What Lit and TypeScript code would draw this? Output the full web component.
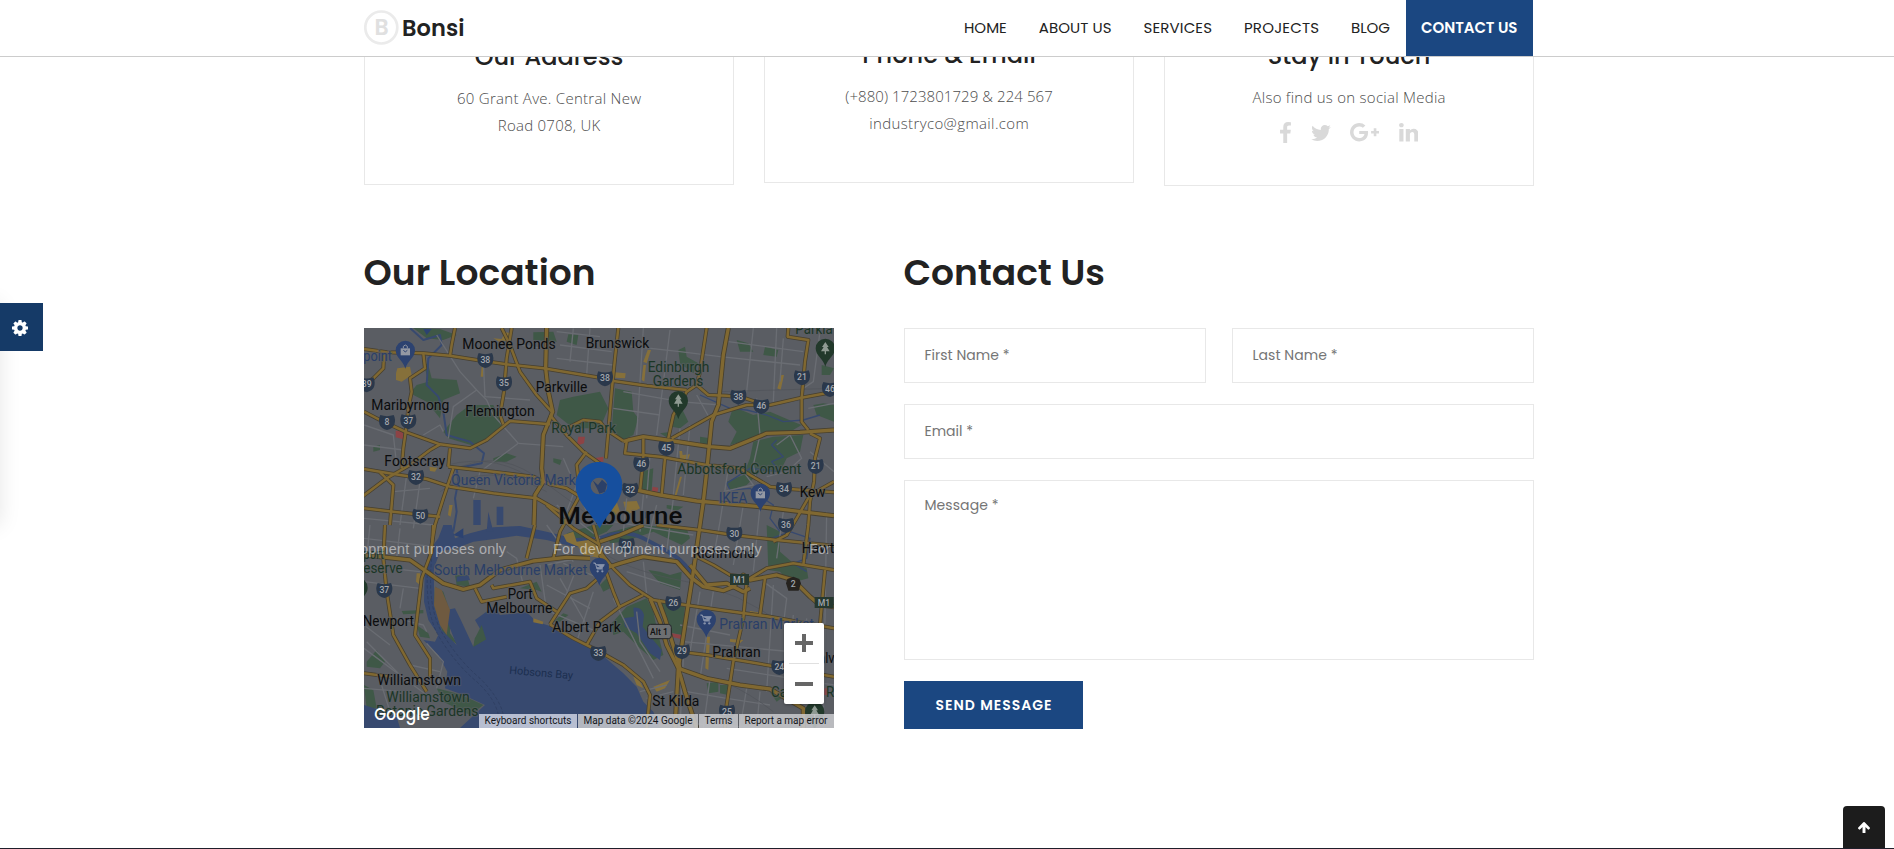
import { LitElement, html, svg, css } from "lit";
import { customElement, property } from "lit/decorators.js";

/* Text whose tracking is adjusted so that it spans a given width. */
@customElement("fit-text")
class FitText extends LitElement {
  @property({ type: Number }) w = 0;
  static styles = css`
    :host { display: inline-block; white-space: nowrap; }
    .inner { display: inline-block; }
  `;
  render() {
    return html`<span class="inner"><slot></slot></span>`;
  }
  firstUpdated() {
    const inner = this.renderRoot.querySelector(".inner") as HTMLElement;
    const n = (this.textContent || "").trim().length;
    const natural = inner.getBoundingClientRect().width;
    const gap = (this.w - natural) / Math.max(1, n - 1);
    inner.style.letterSpacing = gap + "px";
    inner.style.marginRight = -gap + "px";
  }
}

const ICONS = {
  facebook: { box: "479 0 864 1664", w: 11, h: 21, d: "M1343 12v264h-157q-86 0-116 36t-30 108v189h293l-39 296h-254v759h-306v-759h-255v-296h255v-218q0-186 104-288.5t277-102.5q147 0 228 12z" },
  twitter: { box: "108 256 1576 1280", w: 20, h: 16, d: "M1684 408q-67 98-162 167 1 14 1 42 0 130-38 259.5t-115.5 248.5-184.5 210.5-258 146-323 54.5q-271 0-496-145 35 4 78 4 225 0 401-138-105-2-188-64.5t-114-159.5q33 5 61 5 43 0 85-11-112-23-185.5-111.5t-73.5-205.5v-4q68 38 146 41-66-44-105-115t-39-154q0-88 44-163 121 149 294.5 238.5t371.5 99.5q-8-38-8-74 0-134 94.5-228.5t228.5-94.5q140 0 236 102 109-21 205-78-37 115-142 178 93-10 186-50z" },
  google: { box: "0 163 2304 1466", w: 29, h: 18.5, d: "M1437 913q0 208-87 370.5t-248 254-369 91.5q-149 0-285-58t-234-156-156-234-58-285 58-285 156-234 234-156 285-58q286 0 491 192l-199 191q-117-113-292-113-123 0-227.5 62t-165.5 168.5-61 232.5 61 232.5 165.5 168.5 227.5 62q83 0 152.5-23t114.5-57.5 78.5-78.5 49-83 21.5-74h-416v-252h692q12 63 12 122zm867-122v210h-209v209h-210v-209h-209v-210h209v-209h210v209h209z" },
  linkedin: { box: "128 148 1536 1468", w: 19.5, h: 18.5, d: "M477 625v991h-330v-991h330zm21-306q1 73-50.5 122t-135.5 49h-2q-82 0-132-49t-50-122q0-74 51.5-122.5t134.5-48.5 133 48.5 51 122.5zm1166 729v568h-329v-530q0-105-40.5-164.5t-126.5-59.5q-63 0-105.5 34.5t-63.5 85.5q-11 30-11 81v553h-329q2-399 2-647t-1-296l-1-48h329v144h-2q20-32 41-56t56.5-52 87-43.5 114.5-15.5q171 0 275 113.5t104 332.5z" },
  cog: { box: "128 128 1536 1536", w: 16, h: 16, d: "M1152 896q0-106-75-181t-181-75-181 75-75 181 75 181 181 75 181-75 75-181zm512-109v222q0 12-8 23t-20 13l-185 28q-19 54-39 91 35 50 107 138 10 12 10 25t-9 23q-27 37-99 108t-94 71q-12 0-26-9l-138-108q-44 23-91 38-16 136-29 186-7 28-36 28h-222q-14 0-24.5-8.5t-11.5-21.5l-28-184q-49-16-90-37l-141 107q-10 9-25 9-14 0-25-11-126-114-165-168-7-10-7-23 0-12 8-23 15-21 51-66.5t54-70.5q-27-50-41-99l-183-27q-13-2-21-12.5t-8-23.5v-222q0-12 8-23t19-13l186-28q14-46 39-92-40-57-107-138-10-12-10-24 0-10 9-23 26-36 98.5-107.5t94.5-71.5q13 0 26 10l138 107q44-23 91-38 16-136 29-186 7-28 36-28h222q14 0 24.5 8.5t11.5 21.5l28 184q49 16 90 37l142-107q9-9 24-9 13 0 25 10 129 119 165 170 7 8 7 22 0 12-8 23-15 21-51 66.5t-54 70.5q26 50 41 98l183 28q13 2 21 12.5t8 23.5z" },
  up: { box: "117 192 1558 1472", w: 12, h: 11.5, d: "M1675 971q0 51-37 90l-75 75q-38 38-91 38-54 0-90-38l-294-293v704q0 52-37.5 84.5t-90.5 32.5h-128q-53 0-90.5-32.5t-37.5-84.5v-704l-294 293q-36 38-90 38t-90-38l-75-75q-38-38-38-90 0-53 38-91l651-651q35-37 90-37 54 0 91 37l651 651q37 39 37 91z" },
};
const icon = (k: keyof typeof ICONS) => {
  const i = ICONS[k];
  return html`<svg class="icon" width=${i.w} height=${i.h} viewBox=${i.box}><path fill="currentColor" d=${i.d} /></svg>`;
};

/* ---- Map data, in thirds of a CSS pixel ---- */
const PARKS = [
  "160,9 240,12 290,30 250,45 200,40", "190,110 205,120 215,160 290,165 300,205 250,225 240,280 200,230 150,205 170,180 205,170",
  "250,320 290,270 330,240 400,240 430,300 350,365 265,340", "600,225 640,215 720,200 745,250 720,310 640,310 590,270",
  "765,190 815,200 820,260 835,280 820,330 790,345 755,315", "845,440 880,430 875,495 840,500",
  "930,285 965,250 985,290 960,310 935,305", "1120,245 1180,270 1230,260 1300,290 1325,300 1290,320 1220,330 1160,345 1110,360 1130,320 1105,290",
  "1180,350 1240,335 1330,330 1320,380 1280,400 1260,440 1200,440 1160,480 1110,495 1100,470 1150,450 1170,400",
  "1130,45 1165,55 1180,80 1140,80", "1215,65 1255,75 1250,95 1210,90", "955,75 975,65 980,95 1015,115 1000,145 960,115",
  "520,22 580,20 590,50 520,45", "625,28 655,30 650,60 620,50", "1385,120 1422,130 1410,150 1385,150", "1390,235 1422,240 1422,290 1370,270 1360,240",
  "900,325 935,320 925,340", "1020,335 1050,340 1045,360 1020,358", "580,400 605,405 600,420 580,412", "400,400 440,385 470,395 440,410 400,412",
  "620,625 700,600 760,600 740,620 650,660", "740,625 830,600 980,610 990,640 965,660 880,620 790,650 750,655", "865,735 900,740 930,750 965,740 960,795 900,775",
  "1220,600 1260,620 1260,680 1300,715 1340,730 1345,760 1290,775 1260,740 1225,735",
  "755,895 800,845 860,820 880,860 895,930 910,990 880,1005 840,970 790,920 760,930", "890,830 975,845 965,930 920,920 905,870",
  "345,940 370,905 380,945 340,968", "225,785 250,800 270,860 270,925 295,960 250,930 222,840", "125,858 190,855 190,865 130,868",
  "170,900 205,925 210,940 180,935", "20,1010 50,975 75,1010 60,1030 20,1025", "230,1090 300,1108 370,1140 330,1170 250,1130",
  "1040,1075 1075,1070 1075,1100 1045,1105", "1080,1080 1110,1080 1105,1110 1080,1105", "580,890 610,865 625,870 600,890",
  "285,750 320,750 330,785 290,780", "12,1080 40,1095 50,1150 20,1150", "920,540 970,545 950,558 920,550",
  "480,790 530,770 545,800 530,795", "720,780 740,760 750,790 730,800", "1230,1100 1270,1115 1250,1130", "40,365 60,360 60,375 40,380",
];
const MINOR = [
  "230,30 300,140 350,195 380,225 400,270 475,355", "475,355 610,365", "350,195 280,245 265,340", "475,355 360,440 340,520", "190,330 240,300 250,320",
  "12,300 100,330 110,420", "12,360 130,375", "370,110 375,215 510,225", "480,60 550,70", "590,20 720,35", "600,60 755,80", "590,100 760,120",
  "640,10 630,110", "690,10 680,150", "850,9 830,330", "930,15 890,330", "790,200 960,230 1080,240", "780,60 960,80 1080,95 1320,120", "1105,50 1330,80",
  "1180,9 1160,200", "1250,9 1240,230", "760,250 900,270", "870,390 860,520", "960,310 940,510", "990,300 970,510", "1010,210 1060,300",
  "1190,220 1200,330 1180,420 1190,470", "1250,360 1290,330 1325,400 1280,440 1220,455", "1090,500 1180,480 1150,440", "1105,430 1080,590 1060,700", "1150,540 1120,720",
  "1200,545 1180,740", "1270,560 1250,700", "1400,560 1390,1200", "800,520 790,620", "850,510 840,620", "890,540 850,700", "940,520 920,680",
  "760,590 1000,630", "560,600 640,710", "590,540 720,640", "610,400 680,560", "650,480 620,560", "210,490 100,500 95,600", "12,580 220,600", "140,450 120,600",
  "180,470 160,610", "30,600 20,700", "120,610 110,700", "12,640 220,665", "12,770 180,790", "90,730 180,740", "130,790 120,850",
  "12,900 90,960", "20,950 150,1080", "12,970 200,1110", "110,880 190,900 200,920", "200,955 250,1010 230,1090", "55,1050 90,1160", "150,1020 240,1040", "12,1090 130,1100",
  "440,680 470,700 490,780", "540,720 560,860", "610,715 720,760", "560,780 690,850", "600,760 680,900", "570,860 710,920", "650,730 610,830", "700,800 650,950",
  "560,720 700,690", "800,740 960,790", "850,710 860,810", "1020,800 990,980", "1060,800 1020,1060", "1210,770 1280,820 1270,900", "1240,780 1220,1100",
  "1300,870 1280,1060", "1340,880 1320,1060", "960,900 1110,930", "970,950 1400,990", "980,1100 1100,1120 1230,1140", "970,1000 960,1209", "1050,1060 1030,1209",
  "1100,1030 1422,1080", "840,1100 920,1080", "860,1120 940,1100", "900,1190 1200,1209", "1160,1090 1140,1209", "1200,1100 1190,1209", "760,820 850,1000 880,1060",
  "830,860 840,950 900,1040", "1350,380 1422,440", "1270,40 1260,170", "1380,20 1360,170 1330,190", "1345,250 1422,235",
];
const ROADS = [
  "12,72 80,82 190,85 270,92 370,108 440,118 550,130 640,145 720,158", "760,168 860,182 980,195", "1010,180 1045,210 1100,212 1150,218 1200,235", "285,9 275,60 270,92",
  "190,85 195,130 150,160 155,200 145,250 140,300 130,370 125,430", "12,260 60,285 140,322 240,358 330,370 380,345 450,288 570,298", "425,9 450,60 480,140 530,210 575,260",
  "455,9 440,100 432,200 420,270 430,298", "570,270 620,330 670,380 740,430", "680,380 650,420 660,500", "620,310 670,285 720,290 740,315 790,348",
  "12,432 60,440 120,450 200,462 270,485 400,505 530,520 600,560", "0,520 80,460 150,420 210,375 240,358", "265,425 400,440 520,455 570,478 620,490 660,515",
  "270,370 265,425", "280,430 250,520 225,600 210,690", "12,550 100,560 240,575", "60,442 100,480 90,600", "72,90 70,130 40,160 12,180", "775,9 765,100 755,200 745,320 738,400",
  "1040,9 1020,140 1010,180 980,200 940,270 925,340", "935,340 1060,270 1160,240 1230,240 1325,218 1422,200", "800,350 795,385 900,395 1040,420 1140,430 1170,450 1230,485 1290,492 1422,502",
  "850,340 850,400 840,500", "915,400 905,510", "1285,9 1283,35 1345,45 1335,110 1325,220 1325,290 1345,315", "1350,325 1380,340 1365,400 1362,470 1350,530 1345,600 1330,720",
  "1422,470 1350,510 1310,580 1280,630 1240,650", "890,600 1020,615 1120,630 1250,645 1422,662", "720,680 760,730 810,780 880,825 940,835 1080,855 1230,875 1422,910",
  "1160,770 1150,880 1120,1010 1100,1140 1095,1209", "1215,760 1200,870", "720,690 760,800 780,850", "680,960 720,890 780,845 850,810", "960,980 1040,990 1150,1008 1250,1025 1422,1055",
  "570,898 640,940 700,970 790,1020 850,1070 870,1110 860,1209", "570,898 630,805 680,790 720,755", "345,790 365,830 440,815", "395,780 400,790 510,770 530,820 590,860",
  "75,600 70,700 80,800 100,930 150,1020 200,1100", "220,600 215,680 185,760 165,930 210,1000 210,1060", "12,1045 90,1055", "525,600 500,700", "700,600 735,720",
  "1000,690 1060,720 1110,750 1150,755", "1170,760 1220,730 1300,715 1422,735", "1395,735 1380,900", "560,540 640,610 720,660", "660,510 600,620 580,700",
];
const MAJOR = [
  "560,9 557,130 565,200 578,260 550,330 545,430 550,470 525,510 522,600", "1105,9 1090,90 1075,240 1055,290 1040,440 1030,530 1000,740 975,900 955,1030",
  "790,350 805,345 850,335 920,345 1050,365 1110,370 1160,350 1220,325 1320,322 1422,315", "780,485 900,510 1010,528 1200,545 1422,572", "0,690 60,695 150,705 200,740 250,775 310,793 360,780 420,735 520,708 620,697 690,700",
  "720,735 780,715 850,695 950,710 990,755 1030,785 1090,797 1120,785 1150,750 1170,765 1250,750 1300,765 1350,815 1380,840 1422,845", "990,720 1040,780 1100,775 1150,800 1170,790",
  "720,650 780,630 850,600", "870,820 900,890 920,960 955,1030 975,1100 1010,1209", "895,825 915,880 945,980 960,1030", "955,1030 1040,1060 1140,1080 1230,1092 1330,1150 1330,1209", "955,1030 945,1209",
];
/* [text, x, baseline, width, class, size] */
const LABELS: [string, number, number, number, string, number][] = [
  ["Moonee Ponds", 307, 73, 280, "t", 42], ["Brunswick", 677, 69, 191, "t", 42], ["Parkla", 1306, 28, 112, "g", 42], ["point", 10, 108, 86, "b", 42],
  ["Parkville", 527, 200, 155, "t", 42], ["Maribyrnong", 34, 256, 234, "t", 42], ["Flemington", 316, 274, 208, "t", 42], ["Royal Park", 574, 324, 194, "g", 42],
  ["Footscray", 73, 424, 183, "t", 42], ["Queen Victoria Market", 274, 481, 408, "b", 42], ["Edinburgh", 863, 142, 185, "g", 42], ["Gardens", 878, 183, 152, "g", 42],
  ["Abbotsford Convent", 952, 447, 372, "g", 42], ["IKEA", 1076, 534, 86, "b", 42], ["Kew", 1319, 516, 77, "t", 42], ["port", 10, 702, 62, "g", 42],
  ["eserve", 10, 744, 118, "g", 42], ["South Melbourne Market", 222, 750, 460, "b", 42], ["Port", 443, 822, 75, "t", 42], ["Melbourne", 379, 864, 198, "t", 42],
  ["Newport", 8, 904, 154, "t", 42], ["Albert Park", 577, 921, 205, "t", 42], ["Williamstown", 52, 1080, 251, "t", 42], ["Williamstown", 79, 1131, 250, "g", 42],
  ["Botanic Gardens", 48, 1173, 307, "g", 42], ["Richmond", 998, 700, 187, "t", 42], ["Hawt", 1325, 684, 98, "t", 42], ["Prahran Market", 1078, 912, 284, "b", 42],
  ["Prahran", 1057, 996, 145, "t", 42], ["St Kilda", 877, 1143, 141, "t", 42], ["Malv", 1340, 1014, 84, "t", 42], ["Caulfield R", 1233, 1115, 190, "g", 42],
];
const SHIELDS: [string, number, number][] = [
  ["38", 376, 105], ["35", 432, 175], ["39", 20, 178], ["8", 81, 291], ["37", 145, 289], ["32", 168, 456], ["50", 181, 572], ["38", 735, 160], ["38", 1135, 215],
  ["46", 1204, 243], ["21", 1326, 157], ["46", 1410, 192], ["45", 919, 369], ["46", 844, 417], ["32", 811, 494], ["21", 1367, 423], ["34", 1272, 492], ["36", 1278, 600],
  ["37", 73, 795], ["30", 1123, 626], ["26", 940, 834], ["29", 966, 979], ["33", 715, 984], ["24", 1258, 1026], ["25", 1101, 1160], ["20", 800, 660],
];
const PINS: [number, number, string][] = [
  [136, 76, "bag"], [955, 227, "tree"], [1396, 70, "tree"], [1201, 505, "bag"], [718, 727, "cart"], [1039, 883, "cart"], [1364, 1160, "tree"], [-6, 788, "tree"],
];
const GLYPH: Record<string, unknown> = {
  bag: svg`<path d="M-14-6H14V15H-14Z" fill="#9398a4"/><path d="M-6-6V-12Q0-20 6-12V-6" fill="none" stroke="#9398a4" stroke-width="3"/><path d="M-6 0Q0 9 6 0" fill="none" stroke="#2c4270" stroke-width="3"/>`,
  tree: svg`<path d="M0-19L10-4H5L13 9H2V18H-2V9H-13L-5-4H-10Z" fill="#8f9a92"/>`,
  cart: svg`<path d="M-18-13H-12L-7 5H11M-11-8H15L9 1H-7" fill="#8792aa" stroke="#8792aa" stroke-width="3"/><circle cx="-5" cy="12" r="3.5" fill="#8792aa"/><circle cx="9" cy="12" r="3.5" fill="#8792aa"/>`,
};
const URBAN = ["400,40 425,42 435,22 455,25 450,45 420,52", "365,125 370,125 370,155 362,155", "112,130 150,125 155,150 125,170 108,165 108,145",
  "765,142 797,145 795,160 765,158", "863,75 873,75 860,115 850,110", "850,120 858,120 853,170 845,165", "1264,150 1272,150 1262,195 1252,190",
  "958,378 966,378 968,390 990,388 985,402 960,402", "960,455 966,455 950,510 944,510", "208,425 232,428 225,440 210,438", "268,540 278,540 272,575 264,570",
  "610,630 640,620 650,650 720,640 725,700 670,690 655,665 620,650", "745,540 770,530 780,560 760,575", "790,530 830,528 840,550 800,570", "170,745 180,745 180,780 168,770",
  "520,880 550,890 548,898 520,892", "1040,935 1050,935 1045,1035 1036,1030", "1110,942 1150,945 1140,955 1110,950", "1170,858 1195,862 1190,870 1168,868",
  "820,1055 835,1060 850,1090 830,1080", "880,1085 930,1065 915,1090 890,1100"];

const map = svg`
  <rect x="0" y="0" width="1440" height="1220" fill="#5a5d63"/>
  ${PARKS.map((p) => svg`<polygon points=${p} fill="#3f5847"/>`)}
  <g fill="#37496f">
    <path d="M190 945L225 950 235 930 205 885 192 830 194 740 205 680 235 640 250 600H275L285 640 330 625 400 607 480 603 560 620 640 640 700 635 720 655 700 668 640 665 560 645 470 632 420 640 340 650 300 665 240 680 222 730 222 840 245 915 290 960 262 890 258 855 285 850 300 880 340 965 378 943 345 885 400 845 420 870 500 862 530 890 570 903 640 945 720 985 790 1045 830 1085 850 1130 880 1160 900 1209H300L375 1140 310 1110 255 1090 262 1040 235 990Z"/>
    <path d="M12 1140L60 1155 110 1175 120 1209H12Z"/>
    <path d="M340 525H362V600H340ZM410 545H430V600H410ZM385 560L400 620H380Z"/>
    <path d="M820 848Q845 845 852 870L848 905 875 940 905 975 900 1005 870 985 830 925 795 905 790 880 822 875Z"/>
    <path d="M290 755L325 750 330 765 290 770ZM855 560H870V580H855Z"/>
  </g>
  <g fill="none" stroke="#37496f" stroke-linejoin="round">
    <path stroke-width="6" d="M150 9L190 45 240 30 245 60 205 100 200 180 235 215 250 260 260 330 330 350 372 385 365 415 290 430 295 470 285 520 290 560 280 620"/>
    <path stroke-width="12" d="M720 640Q790 610 850 640Q900 665 940 690T1000 760"/>
    <path stroke-width="4" d="M1020 210L1110 250 1160 255 1220 270 1270 290 1330 285 1380 270M1250 345L1235 360 1270 395 1235 410 1260 440 1170 430 1100 475 1110 495 1170 490 1195 510 1240 540 1230 580 1260 620M1235 640L1290 620 1350 640 1340 700 1300 715 1340 740"/>
  </g>
  <path d="M190 12L215 12 200 30ZM280 630L310 610V640Z" fill="#2c4270"/>
  <path d="M340 965L378 943 365 900 345 940Z" fill="#3f5847"/>
  <path d="M225 785L245 795 270 855 260 930 240 900 222 840Z" fill="#6f5a40"/>
  ${URBAN.map((p) => svg`<polygon points=${p} fill="#86703a"/>`)}
  <g fill="#8d4345"><path d="M107 317H130V343L107 337ZM655 335L675 335 672 355 650 362ZM700 400L730 395V410H705ZM878 485L895 488 892 503 875 500ZM935 925L965 930 962 942 935 935ZM1390 1090H1405V1110H1390Z"/></g>
  <g fill="none" stroke="#6a6d73" stroke-width="4" stroke-linejoin="round">${MINOR.map((p) => svg`<polyline points=${p}/>`)}</g>
  <g fill="none" stroke="#505359" stroke-width="2"><path d="M270 440Q400 370 520 450T720 600M240 500Q380 400 560 500M260 420Q420 380 540 480M740 690Q820 740 980 770T1270 900M1080 200L1422 190M960 1040Q1100 1050 1240 1160"/></g>
  <path fill="none" stroke="#2c3b5c" stroke-width="2" stroke-dasharray="10 6" d="M215 700Q200 850 250 930T360 1060Q420 1120 430 1170M205 700Q190 860 240 940T350 1070Q405 1120 415 1170"/>
  <g fill="none" stroke="#463f2e" stroke-linejoin="round" stroke-width="12">${ROADS.map((p) => svg`<polyline points=${p}/>`)}</g>
  <g fill="none" stroke="#463f2e" stroke-linejoin="round" stroke-width="15">${MAJOR.map((p) => svg`<polyline points=${p}/>`)}</g>
  <g fill="none" stroke="#806831" stroke-linejoin="round" stroke-width="7.5">${ROADS.map((p) => svg`<polyline points=${p}/>`)}</g>
  <g fill="none" stroke="#806831" stroke-linejoin="round" stroke-width="10">${MAJOR.map((p) => svg`<polyline points=${p}/>`)}</g>
  ${SHIELDS.map(([t, x, y]) => svg`<g transform="translate(${x} ${y})"><path d="M-20-21Q0-14 20-21Q27-8 22 8Q17 19 0 24Q-17 19-22 8Q-27-8-20-21Z" fill="#2a384b"/><text class="sh" y="9">${t}</text></g>`)}
  ${[[1138, 764], [1392, 833]].map(([x, y]) => svg`<g transform="translate(${x} ${y})"><rect x="-28" y="-17" width="57" height="33" fill="#26382f"/><text class="sh" y="9">M1</text></g>`)}
  <path d="M1282 762L1300 755 1318 762 1323 775 1316 797H1285L1278 775Z" fill="#26231f"/><text class="sh" x="1300" y="787">2</text>
  <rect x="863" y="898" width="71" height="43" rx="9" fill="#6d6f72" stroke="#24262a" stroke-width="3"/><text class="sh dark" x="897" y="930">Alt 1</text>
  ${LABELS.map(([t, x, y, w, c, s]) => svg`<text class=${"lb " + c} x=${x} y=${y} font-size=${s} textLength=${w} lengthAdjust="spacingAndGlyphs">${t}</text>`)}
  <text class="lb bay" x="447" y="1046" font-size="33" textLength="192" transform="rotate(5 447 1046)">Hobsons Bay</text>
  <text class="lb t city" x="595" y="597" font-size="74" textLength="372" lengthAdjust="spacingAndGlyphs">Melbourne</text>
  ${PINS.map(([x, y, k]) => svg`<g transform="translate(${x} ${y})"><path d="M0-29A29 29 0 0 1 29 0C29 22 6 32 0 55C-6 32-29 22-29 0A29 29 0 0 1 0-29Z" fill=${k === "tree" ? "#22392b" : "#2c4270"}/>${GLYPH[k]}</g>`)}
  <path fill="#164f9e" fill-rule="evenodd" d="M717 411C757 411 787 442 787 480C787 530 745 560 719 610C690 560 647 530 647 480C647 442 677 411 717 411ZM717 458A25 25 0 1 0 717 508A25 25 0 1 0 717 458Z"/>
  <path d="M698 466L714 480 726 464 741 478 735 500 718 506 712 492Z" fill="#2b4068"/>
  <g class="wm"><text x="-186" y="687" textLength="624">For development purposes only</text><text x="579" y="687" textLength="626">For development purposes only</text><text x="1347" y="687">For</text></g>
  <text class="goog" x="43" y="1184" textLength="166" lengthAdjust="spacingAndGlyphs">Google</text>
`;

@customElement("location-map")
class LocationMap extends LitElement {
  static styles = css`
    :host { display: block; position: relative; width: 470px; height: 400px; overflow: hidden; font-family: Roboto, "Liberation Sans", sans-serif; }
    .canvas { display: block; width: 470px; height: 400px; }
    .lb { paint-order: stroke; stroke: #5a5d63; stroke-opacity: 0.55; stroke-width: 7px; stroke-linejoin: round; }
    .t { fill: #0b0c0d; } .g { fill: #1b3626; } .b { fill: #2a3f68; }
    .bay { fill: #1c2f50; stroke: none; }
    .city { font-weight: 500; }
    .sh { font-size: 26px; font-weight: 500; fill: #a3a7ad; text-anchor: middle; }
    .dark { fill: #111; }
    .wm { font-family: "Liberation Sans", Arial, sans-serif; font-size: 43px; fill: #fff; fill-opacity: 0.5; }
    .goog { font-family: Poppins, sans-serif; font-size: 51px; font-weight: 500; fill: #fff; }
    .zoom { position: absolute; right: 10px; bottom: 24px; width: 40px; height: 81px; background: #fff; border-radius: 2px; box-shadow: 0 1px 3px rgba(0,0,0,.3); }
    .zoom svg { display: block; }
    .legal { position: absolute; right: 0; bottom: 0; display: flex; gap: 1px; height: 14px; line-height: 14px; font-size: 10px; color: #14161a; }
    .legal span { background: rgba(205,210,225,.86); padding: 0 5.5px; white-space: nowrap; }
    .legal span:nth-child(n+2) { background: rgba(200,201,205,.86); }
    .legal span:last-child { padding-right: 6.5px; }
  `;
  render() {
    return html`
      <svg class="canvas" viewBox="12 9 1410 1200">${map}</svg>
      <div class="zoom"><svg width="40" height="81"><path d="M11 18h18v4H11zM18 11h4v18h-4zM11 59h18v4H11z" fill="#666"/><path d="M5 40h30v1H5z" fill="#e0e0e0"/></svg></div>
      <div class="legal"><span><fit-text w="87">Keyboard shortcuts</fit-text></span><span><fit-text w="109">Map data ©2024 Google</fit-text></span><span><fit-text w="28">Terms</fit-text></span><span><fit-text w="83">Report a map error</fit-text></span></div>
    `;
  }
}

@customElement("app-root")
class AppRoot extends LitElement {
  static styles = css`
    :host { display: block; position: relative; width: 100%; height: 849px; overflow: hidden; background: #fff; color: #222; font-family: Poppins, Inter, sans-serif; }
    * { box-sizing: border-box; }
    h2, h3, p { margin: 0; }
    .icon { display: block; }
    header { position: absolute; z-index: 2; inset: 0 0 auto 0; height: 57px; background: #fff; border-bottom: 1px solid #ccc; }
    .bar { width: 1170px; margin: 0 auto; height: 56px; display: flex; justify-content: space-between; transform: translateX(2px); }
    .brand { display: flex; align-items: center; gap: 3px; }
    .badge { display: block; }
    .name { font-size: 22.5px; font-weight: 600; line-height: 56px; }
    nav { display: flex; margin-right: 1px; }
    nav a { height: 56px; line-height: 56px; padding: 0 16px; font-size: 15px; font-weight: 400; color: #222; }
    nav a.on { background: #1b4781; color: #fff; font-weight: 600; padding: 0 15.5px 0 15px; }
    main { width: 1170px; margin: 0 auto; transform: translateX(2px); }
    .cards { display: grid; grid-template-columns: repeat(3, 370px); gap: 30px; align-items: start; height: 186px; }
    .card { border: 1px solid #e8e8e8; border-top: 0; text-align: center; padding-top: 42px; height: 185px; }
    .card.b { padding-top: 40px; height: 183px; }
    .card.c { padding-top: 41px; height: 186px; }
    h3 { font-size: 24px; font-weight: 500; line-height: 30px; margin-bottom: 13px; }
    .card p { font: 300 15px/27px "Open Sans", sans-serif; color: #4c4c4c; }
    .social { display: flex; align-items: center; gap: 19.5px; color: #d9d9d9; justify-content: center; margin-top: 11px; height: 21px; }
    .cols { display: grid; grid-template-columns: 470px 630px; gap: 70px; padding-top: 62px; }
    h2 { font-size: 36px; font-weight: 600; line-height: 50px; height: 50px; margin-bottom: 30px; }
    h2 fit-text { margin-left: -0.5px; }
    form { display: grid; grid-template-columns: 1fr 1fr; gap: 21px 26px; }
    .field { height: 55px; border: 1px solid #e8e8e8; padding: 0 19.5px; line-height: 53px; font-size: 14px; color: #757575; }
    .wide { grid-column: 1 / 3; }
    .area { height: 180px; line-height: 49px; }
    .send { width: 179px; height: 48px; line-height: 48px; text-align: center; background: #1b4781; color: #fff; font-size: 14px; font-weight: 600; }
    .gear { position: absolute; left: 0; top: 303px; width: 43px; height: 48px; background: #153a67; color: #fff; display: flex; align-items: center; padding: 1px 0 0 12px; }
    .panel { position: absolute; left: -200px; top: 303px; width: 200px; height: 222px; box-shadow: 0 0 20px rgba(0,0,0,.1); }
    .top { position: absolute; left: 1843px; top: 806px; width: 42px; height: 43px; border-radius: 4px 4px 0 0; background: #1c1c1c; color: #fff; display: flex; align-items: center; justify-content: center; }
    .foot { position: absolute; left: 0; right: 0; bottom: 0; height: 1px; background: #1f1f2b; }
  `;
  render() {
    const links: [string, number][] = [["HOME", 42.8], ["ABOUT US", 72.7], ["SERVICES", 68.5], ["PROJECTS", 75], ["BLOG", 39]];
    return html`
      <header><div class="bar">
        <div class="brand">
          <svg class="badge" width="35" height="56"><circle cx="17.3" cy="27.5" r="16" fill="none" stroke="#ebebeb" stroke-width="2.7"/><text x="17.7" y="35" text-anchor="middle" font-size="22" font-weight="600" fill="#e0e0e0">B</text></svg>
          <fit-text class="name" w="62.5">Bonsi</fit-text>
        </div>
        <nav>${links.map(([t, w]) => html`<a><fit-text w=${w}>${t}</fit-text></a>`)}<a class="on"><fit-text w="96.5">CONTACT US</fit-text></a></nav>
      </div></header>
      <main>
        <section class="cards">
          <div class="card"><h3><fit-text w="148.5">Our Address</fit-text></h3><p><fit-text w="184">60 Grant Ave. Central New</fit-text></p><p><fit-text w="102.5">Road 0708, UK</fit-text></p></div>
          <div class="card b"><h3><fit-text w="173.5">Phone &amp; Email</fit-text></h3><p><fit-text w="207.5">(+880) 1723801729 &amp; 224 567</fit-text></p><p><fit-text w="159.5">industryco@gmail.com</fit-text></p></div>
          <div class="card c"><h3><fit-text w="162.5">Stay In Touch</fit-text></h3><p><fit-text w="193">Also find us on social Media</fit-text></p>
            <div class="social">${icon("facebook")}${icon("twitter")}${icon("google")}${icon("linkedin")}</div></div>
        </section>
        <section class="cols">
          <div><h2><fit-text w="232">Our Location</fit-text></h2><location-map></location-map></div>
          <div><h2><fit-text w="201.5">Contact Us</fit-text></h2>
            <form>
              <div class="field"><fit-text w="85">First Name *</fit-text></div>
              <div class="field"><fit-text w="85">Last Name *</fit-text></div>
              <div class="field wide"><fit-text w="48.5">Email *</fit-text></div>
              <div class="field wide area"><fit-text w="74">Message *</fit-text></div>
              <div class="send"><fit-text w="116">SEND MESSAGE</fit-text></div>
            </form></div>
        </section>
      </main>
      <div class="panel"></div>
      <div class="gear">${icon("cog")}</div>
      <div class="top">${icon("up")}</div>
      <div class="foot"></div>
    `;
  }
}
